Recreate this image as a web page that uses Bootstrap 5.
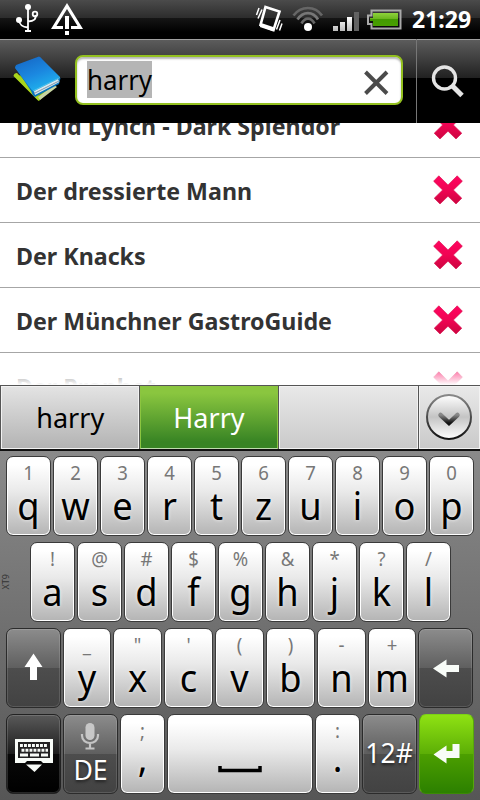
<!DOCTYPE html>
<html lang="de">
<head>
<meta charset="utf-8">
<meta name="viewport" content="width=device-width, initial-scale=1">
<title>Library search</title>
<link href="https://cdn.jsdelivr.net/npm/bootstrap@5.3.0/dist/css/bootstrap.min.css" rel="stylesheet">
<style>
body{font-family:"Noto Sans","Open Sans",sans-serif;background:#000;color:#000}
.screen{width:480px;height:800px}
svg{display:block;flex:none}
.statusbar{height:39px;background:linear-gradient(#4b4b4b 0,#2c2c2c 18px,#151515 18px,#000 32px);color:#fff}
.clock{font-size:23px;font-weight:700;line-height:38px;width:60px;white-space:nowrap}
.appbar{height:84px;background:linear-gradient(#a0a0a0 1px,#5c5c5c 1px,#212121 39px,#000 39px)}
.searchbox{width:328px;height:50px;border:2px solid #93c01f;border-radius:8px;background:#fff;box-shadow:inset 0 2px 2px #b5b5b5;padding:0 10px}
.selected{background:#b5b5b5;height:37px;line-height:37px;width:65px;font-size:27px;white-space:nowrap;margin-bottom:1px}
.sx{display:inline-block;transform-origin:0 50%}
.narrow{transform:scaleX(.958)}
.searchbtn{width:64px;border-left:1px solid #777}
.results{height:262px;background:#fff}
.results ul{margin-top:-30px}
.results li{height:65px;border:0;border-bottom:1px solid #a6a6a6;border-radius:0;padding:0 16px;font-size:24px;font-weight:700;color:#333;line-height:64px;background:#fff}
.results .sx{transform:scaleX(.967);padding-top:2px}
.fade-edge{left:0;right:0;bottom:0;height:26px;background:linear-gradient(rgba(255,255,255,0),#fff)}
.cands{height:66px;border-top:1px solid #555;border-bottom:2px solid #111;background:#555}
.cand{width:139px;margin-right:1px;border:1px solid #f2f2f2;background:linear-gradient(#e8e8e8,#cacaca);font-size:28px;line-height:61px}
.cand span{transform:scaleX(.965)}
.cand.first{width:138px;margin-left:1px;background:linear-gradient(#e3e3e3,#b3b3b3)}
.cand.chosen{border-color:#8cc540;border-bottom-color:#bfdcae;background:linear-gradient(#8ac63f 10%,#388424 90%);color:#fff}
.cand.last{width:61px;margin:0}
.keyboard{height:349px;background:linear-gradient(#8a8a8a,#565656);padding:5px 6px 0}
.keyrow{gap:2px;height:80px;margin-bottom:6px}
.xt{font-size:9px;line-height:10px;color:#333;left:1px;top:123px;writing-mode:vertical-rl;transform:rotate(180deg)}
.key{width:45px;height:80px;border:1px solid #3a3a3a;border-radius:7px;background:linear-gradient(#fff 10%,#e9e9e9 45%,#b4b4b4);box-shadow:inset 0 0 0 1px #fff;white-space:nowrap}
.key i,.key b{font-style:normal;font-weight:400;display:block}
.key i{font-size:19.5px;line-height:31px;color:#777;transform:scaleX(.95)}
.key b{font-size:39px;line-height:34px;transform:scaleX(.93);text-shadow:0 0 4px rgba(255,255,255,.8)}
.key.punct b{line-height:22px}
.w48{width:48px}.w49{width:49px}.w55{width:55px}.wspace{width:146px}
.key.gray{background:linear-gradient(#8c8c8c,#5f5f5f 50%,#4d4d4d 50%,#424242);border-color:#2b2b2b;box-shadow:inset 0 0 0 1px rgba(255,255,255,.13);color:#fff}
.key.dark{background:linear-gradient(#595959,#1c1c1c 50%,#090909 50%,#000);border-color:#222;box-shadow:inset 0 0 0 1px rgba(255,255,255,.15)}
.key.green{background:linear-gradient(#8fe213,#5cae06 50%,#4c9f00 50%,#2c8000);border-color:#7bd413 #57a70c #3b8a05;box-shadow:none}
.key.gray span{font-size:28px;line-height:37px;text-shadow:0 2px 3px #222;transform:scaleX(.95)}
.key.gray .num{padding-bottom:3px}
</style>
<script src="https://cdn.jsdelivr.net/npm/bootstrap@5.3.0/dist/js/bootstrap.bundle.min.js"></script>
</head>
<body>
<svg width="0" height="0" class="position-absolute" aria-hidden="true">
 <defs>
  <linearGradient id="pink" x2="0" y2="1"><stop stop-color="#ff0560"/><stop offset=".5" stop-color="#f00453"/><stop offset="1" stop-color="#cb0640"/></linearGradient>
  <linearGradient id="blue" x1=".2" x2=".7" y2="1"><stop stop-color="#1668c6"/><stop offset=".5" stop-color="#1b88e0"/><stop offset="1" stop-color="#20b8ef"/></linearGradient>
  <linearGradient id="batt" x2="0" y2="1"><stop stop-color="#8ed33b"/><stop offset=".45" stop-color="#6bb51f"/><stop offset=".5" stop-color="#439b00"/><stop offset="1" stop-color="#489f00"/></linearGradient>
  <linearGradient id="disc" x2="0" y2="1"><stop stop-color="#fff"/><stop offset=".5" stop-color="#c4c4c4"/><stop offset="1" stop-color="#fff"/></linearGradient>
  <linearGradient id="ring" x2="0" y2="1"><stop stop-color="#888"/><stop offset="1" stop-color="#111"/></linearGradient>
  <linearGradient id="sig" x2="0" y2="1"><stop stop-color="#fff"/><stop offset="1" stop-color="#bbb"/></linearGradient>
  <symbol id="del" viewBox="0 0 30 30"><path d="M5.8.8 15 9.900 24.200.8 29.400 6.200 20.400 15 28.800 23.200 23 29 15 21.200 7 29 1.200 23.200 9.600 15 .6 6.200z" fill="url(#pink)" stroke="#d80a4b" stroke-width=".6"/></symbol>
 </defs>
</svg>
<main class="screen overflow-hidden d-flex flex-column mx-auto">
 <div class="statusbar d-flex flex-shrink-0">
  <svg width="240" height="39" fill="none" stroke="#fff">
   <g stroke-width="1.800"><path d="M28 8v23M28 27.500C22 27 19.500 25 19 20M28 21.500C34 21 36.500 19 35.500 15"/><circle cx="35" cy="14" r="2.300"/></g>
   <g fill="#fff" stroke="none"><circle cx="28" cy="7" r="3"/><circle cx="19" cy="20" r="3"/><path d="M25 30h6v2h-6z"/>
   <path fill-rule="evenodd" d="M67 3 83 29H71v-3h6.500L67 9 56.500 26H63v3H51zM65 16h4v13h-4zM65 31h4v4h-4z"/></g>
  </svg>
  <svg width="172" height="39" fill="none">
   <g stroke="#fff"><path d="M265.500 7 279.500 11.500 273.500 30 260.500 25z" transform="translate(-240)" stroke-width="2.600"/><path d="M20.500 25 34 29.500" stroke-width="4"/><path d="M22 9.500 18 18.500M19 8l-2.500 7M36.500 29.500l3.500-9.500M39.500 30.500l2.500-7" stroke-width="1.500"/></g>
   <g stroke="#666" stroke-width="2.700"><path d="M53.500 15.500C61 5.500 75 5.500 82 15.500"/><path d="M57.500 19.500C63 11 73 11 78 19.500" stroke="#777"/><path d="M61.500 23.500C65 17 71 17 74.500 23.500"/></g><circle cx="68" cy="27" r="4" fill="#fff"/>
   <g fill="url(#sig)"><path d="M93 26h5v5h-5zM100 22h5v9h-5zM107 17h5v14h-5z"/><path d="M114 12h5v19h-5z" fill="#626262"/></g>
   <path d="M131.500 10.500H160.500V28.500H131.500V24H128V15.500H131.500z" stroke="#aaa" stroke-width="2"/><path d="M133 13H158V26H133V21H130V18H133z" fill="url(#batt)"/>
  </svg>
  <div class="clock"><span class="sx">21:29</span></div>
 </div>
 <div class="appbar d-flex">
  <svg width="75" height="83" viewBox="0 39 75 83">
   <path d="M14 76 39 101 59 81 54 72z" fill="#86b90b"/><path d="M13.500 76Q14 73 17 73L40 97 38.500 101z" fill="#a9d41c"/><path d="M38 97 54 85 57 87 40 100z" fill="#c8d5a2"/>
   <path d="M15 67Q17 64 20 66L60.500 78 59 84 35 97Q32 95 31 91z" fill="#0874bd"/>
   <path d="M34 91 58 79 59.500 82 35 95z" fill="#d6e7ef"/><path d="M34 93.500 59 81" stroke="#8199a9"/>
   <path d="M16 65 39 56.500Q41 57 42 59L60 77 34 91Q32 91 31 89L15 68z" fill="url(#blue)"/><path d="M33 91 60 77.500" stroke="#54c8ef" stroke-width="1"/>
  </svg>
  <div class="searchbox d-flex align-items-center justify-content-between mt-3">
   <div class="selected"><span class="sx narrow">harry</span></div>
   <svg width="30" height="30" stroke="#4b4b4b" stroke-width="3.900" class="mt-1"><path d="M4.500 5 26 26.500M26 5 4.500 26.500"/></svg>
  </div>
  <div class="searchbtn ms-auto d-flex">
   <svg width="63" height="84" fill="none" stroke="#e4e4e4"><circle cx="27.500" cy="39" r="11" stroke-width="3.400"/><path d="M35 46.500 45 56.500" stroke-width="5"/></svg>
  </div>
 </div>
 <div class="results overflow-hidden position-relative">
  <ul class="list-group list-group-flush">
   <li class="list-group-item d-flex align-items-center justify-content-between"><span class="sx">David Lynch - Dark Splendor</span><svg width="32" height="30"><use href="#del" width="32" height="30"/></svg></li>
   <li class="list-group-item d-flex align-items-center justify-content-between"><span class="sx">Der dressierte Mann</span><svg width="32" height="30"><use href="#del" width="32" height="30"/></svg></li>
   <li class="list-group-item d-flex align-items-center justify-content-between"><span class="sx">Der Knacks</span><svg width="32" height="30"><use href="#del" width="32" height="30"/></svg></li>
   <li class="list-group-item d-flex align-items-center justify-content-between"><span class="sx">Der Münchner GastroGuide</span><svg width="32" height="30"><use href="#del" width="32" height="30"/></svg></li>
   <li class="list-group-item d-flex align-items-center justify-content-between"><span class="sx">Der Prophet</span><svg width="32" height="30"><use href="#del" width="32" height="30"/></svg></li>
  </ul>
  <div class="fade-edge position-absolute"></div>
 </div>
 <div class="cands d-flex text-center">
  <div class="cand first"><span class="d-inline-block">harry</span></div>
  <div class="cand chosen"><span class="d-inline-block">Harry</span></div>
  <div class="cand"></div>
  <div class="cand last"><svg width="59" height="61" fill="none"><circle cx="29" cy="30" r="22" fill="url(#disc)" stroke="url(#ring)" stroke-width="2"/><path d="M20.500 28 29 36 37.500 28" stroke="url(#ring)" stroke-width="4.500" stroke-linecap="round"/></svg></div>
 </div>
 <div class="keyboard position-relative text-center">
  <div class="xt position-absolute">XT9</div>
  <div class="keyrow d-flex">
   <div class="key"><i>1</i><b>q</b></div><div class="key"><i>2</i><b>w</b></div><div class="key"><i>3</i><b>e</b></div><div class="key"><i>4</i><b>r</b></div><div class="key"><i>5</i><b>t</b></div><div class="key"><i>6</i><b>z</b></div><div class="key"><i>7</i><b>u</b></div><div class="key"><i>8</i><b>i</b></div><div class="key"><i>9</i><b>o</b></div><div class="key"><i>0</i><b>p</b></div>
  </div>
  <div class="keyrow d-flex ps-4">
   <div class="key"><i>!</i><b>a</b></div><div class="key"><i>@</i><b>s</b></div><div class="key"><i>#</i><b>d</b></div><div class="key"><i>$</i><b>f</b></div><div class="key"><i>%</i><b>g</b></div><div class="key"><i>&amp;</i><b>h</b></div><div class="key"><i>*</i><b>j</b></div><div class="key"><i>?</i><b>k</b></div><div class="key"><i>/</i><b>l</b></div>
  </div>
  <div class="keyrow d-flex">
   <div class="key gray w55"><svg width="53" height="78"><path d="M26.500 24.500 35.500 38H30V51H23V38H17.500z" fill="#fff"/></svg></div>
   <div class="key w48"><i>_</i><b>y</b></div><div class="key w49"><i>"</i><b>x</b></div><div class="key w49"><i>'</i><b>c</b></div><div class="key w49"><i>(</i><b>v</b></div><div class="key w49"><i>)</i><b>b</b></div><div class="key w49"><i>-</i><b>n</b></div><div class="key w48"><i>+</i><b>m</b></div>
   <div class="key gray w55"><svg width="53" height="78"><path d="M14 39.500 27.500 30.500V36H40V43H27.500V48.500z" fill="#f8fcf8"/></svg></div>
  </div>
  <div class="keyrow d-flex">
   <div class="key dark w55"><svg width="53" height="78"><path d="M8 24H46V48H36L34 46H20L18 48H8z" fill="#f8fcf8"/><path d="M19 49.500H35L27.500 57z" fill="#f8fcf8"/><rect x="11" y="27" width="32" height="16" fill="#222"/><path d="M13 30.500H41M14.500 35.200H41" stroke="#f8fcf8" stroke-width="3" stroke-dasharray="2.900 1.100"/><path d="M13 40H21M23 40H32M34 40H41" stroke="#f8fcf8" stroke-width="3"/></svg></div>
   <div class="key gray w55"><svg width="53" height="36"><rect x="21.500" y="8" width="9" height="17" rx="4.500" fill="#c7c7c7"/><path d="M18 19V20.500C18 30.500 34 30.500 34 20.500V19M26 28V33M21.500 33.500H30.500" fill="none" stroke="#c4c4c4" stroke-width="2.200"/></svg><span class="d-block">DE</span></div>
   <div class="key punct"><i>;</i><b>,</b></div>
   <div class="key wspace"><svg width="144" height="78"><path d="M52 51V55.500H92V51" fill="none" stroke="#000" stroke-width="3.500"/></svg></div>
   <div class="key punct"><i>:</i><b>.</b></div>
   <div class="key gray w55 d-flex align-items-center justify-content-center"><span class="d-block num">12#</span></div>
   <div class="key green w55"><svg width="53" height="78"><path d="M13.500 39.500 26.500 30.500V36H32.500V29H39.500V43H26.500V48.500z" fill="#f8fcf8"/></svg></div>
  </div>
 </div>
</main>
</body>
</html>
